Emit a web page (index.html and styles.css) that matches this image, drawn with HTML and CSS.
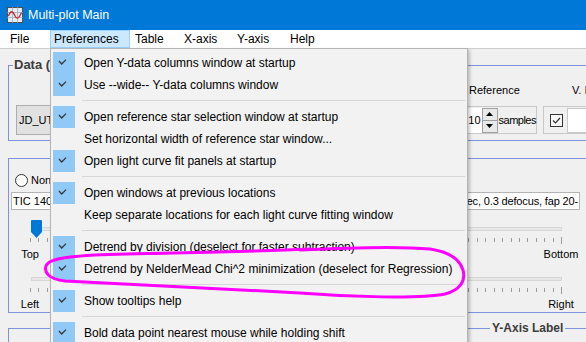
FILE: index.html
```html
<!DOCTYPE html>
<html>
<head>
<meta charset="utf-8">
<title>Multi-plot Main</title>
<link rel="stylesheet" href="styles.css">
</head>
<body>
<div class="window">
  <div class="titlebar">
    <svg class="app-icon" viewBox="0 0 16 16" width="16" height="16">
      <rect x="0.5" y="0.5" width="15" height="15" fill="#e4edf6" stroke="#505050"/>
      <path d="M0.5 5.5H15.5M0.5 10.5H15.5M5.5 0.5V15.5M10.5 0.5V15.5" stroke="#a9bccc" fill="none"/>
      <path d="M1.5 9 C3.5 3.5, 5.5 3.5, 7.5 8 S11.5 12.5, 14.5 5.5" stroke="#d42424" stroke-width="1.3" fill="none"/>
    </svg>
    <span class="title">Multi-plot Main</span>
  </div>

  <div class="menubar">
    <span class="mb-item mb-file">File</span>
    <span class="mb-item mb-active">Preferences</span>
    <span class="mb-item mb-table">Table</span>
    <span class="mb-item mb-axis">X-axis</span>
    <span class="mb-item mb-axis">Y-axis</span>
    <span class="mb-item">Help</span>
  </div>

  <div class="client">
    <fieldset class="group group-data">
      <legend class="legend-data">Data (JD)</legend>
      <div class="data-grid">
        <div class="btn">JD_UTC</div>
        <div class="ref-label">Reference</div>
        <div class="vl-label">V. I</div>
        <div class="spin-box">
          <div class="spin-field">10</div>
          <div class="spin-btns">
            <span class="spin-btn"><svg width="7" height="4" viewBox="0 0 7 4"><path d="M0 4 L3.5 0 L7 4Z" fill="#000"/></svg></span>
            <span class="spin-btn"><svg width="7" height="4" viewBox="0 0 7 4"><path d="M0 0 L3.5 4 L7 0Z" fill="#000"/></svg></span>
          </div>
          <span class="samples">samples</span>
        </div>
        <div class="chk-box">
          <span class="checkbox"><svg width="11" height="11" viewBox="0 0 11 11"><path d="M2 5.5 L4.5 8 L9 3" stroke="#333" stroke-width="1.2" fill="none"/></svg></span>
          <span class="chk-field"></span>
        </div>
      </div>
    </fieldset>

    <fieldset class="group group-plot">
      <div class="radio-row"><span class="radio"></span><span class="radio-label">None</span></div>
      <div class="text-field"><span>TIC 1402</span><span class="field-tail">sec, 0.3 defocus, fap 20-</span></div>
      <div class="slider slider-first">
        <div class="track-row">
          <div class="track"></div>
          <svg class="thumb" width="11" height="18" viewBox="0 0 11 18"><path d="M1 0 H10 Q11 0 11 1 V12 L5.5 18 L0 12 V1 Q0 0 1 0Z" fill="#0078d7"/></svg>
        </div>
        <div class="ticks"></div>
        <div class="slider-labels"><span>Top</span><span>Bottom</span></div>
      </div>
      <div class="slider">
        <div class="track-row">
          <div class="track"></div>
          <svg class="thumb thumb-mid" width="11" height="18" viewBox="0 0 11 18"><path d="M1 0 H10 Q11 0 11 1 V12 L5.5 18 L0 12 V1 Q0 0 1 0Z" fill="#0078d7"/></svg>
        </div>
        <div class="ticks"></div>
        <div class="slider-labels"><span>Left</span><span>Right</span></div>
      </div>
    </fieldset>

    <fieldset class="group group-label">
      <legend class="legend-y">Y-Axis Label</legend>
    </fieldset>
  </div>

  <div class="dropdown">
    <div class="item"><span class="check on"><svg viewBox="0 0 22 22" width="22" height="22"><path d="M6 9 L8.7 12 L13 7.6" stroke="#333" stroke-width="1.2" fill="none"/></svg></span><span class="label">Open Y-data columns window at startup</span></div>
    <div class="item"><span class="check on"><svg viewBox="0 0 22 22" width="22" height="22"><path d="M6 9 L8.7 12 L13 7.6" stroke="#333" stroke-width="1.2" fill="none"/></svg></span><span class="label">Use --wide-- Y-data columns window</span></div>
    <div class="sep"></div>
    <div class="item"><span class="check on"><svg viewBox="0 0 22 22" width="22" height="22"><path d="M6 9 L8.7 12 L13 7.6" stroke="#333" stroke-width="1.2" fill="none"/></svg></span><span class="label">Open reference star selection window at startup</span></div>
    <div class="item"><span class="check"></span><span class="label">Set horizontal width of reference star window...</span></div>
    <div class="item"><span class="check on"><svg viewBox="0 0 22 22" width="22" height="22"><path d="M6 9 L8.7 12 L13 7.6" stroke="#333" stroke-width="1.2" fill="none"/></svg></span><span class="label">Open light curve fit panels at startup</span></div>
    <div class="sep"></div>
    <div class="item"><span class="check on"><svg viewBox="0 0 22 22" width="22" height="22"><path d="M6 9 L8.7 12 L13 7.6" stroke="#333" stroke-width="1.2" fill="none"/></svg></span><span class="label">Open windows at previous locations</span></div>
    <div class="item"><span class="check"></span><span class="label">Keep separate locations for each light curve fitting window</span></div>
    <div class="sep"></div>
    <div class="item"><span class="check on"><svg viewBox="0 0 22 22" width="22" height="22"><path d="M6 9 L8.7 12 L13 7.6" stroke="#333" stroke-width="1.2" fill="none"/></svg></span><span class="label">Detrend by division (deselect for faster subtraction)</span></div>
    <div class="item"><span class="check on"><svg viewBox="0 0 22 22" width="22" height="22"><path d="M6 9 L8.7 12 L13 7.6" stroke="#333" stroke-width="1.2" fill="none"/></svg></span><span class="label">Detrend by NelderMead Chi^2 minimization (deselect for Regression)</span></div>
    <div class="sep"></div>
    <div class="item"><span class="check on"><svg viewBox="0 0 22 22" width="22" height="22"><path d="M6 9 L8.7 12 L13 7.6" stroke="#333" stroke-width="1.2" fill="none"/></svg></span><span class="label">Show tooltips help</span></div>
    <div class="sep"></div>
    <div class="item"><span class="check on"><svg viewBox="0 0 22 22" width="22" height="22"><path d="M6 9 L8.7 12 L13 7.6" stroke="#333" stroke-width="1.2" fill="none"/></svg></span><span class="label">Bold data point nearest mouse while holding shift</span></div>
  </div>

  <svg class="annotation" width="586" height="342" viewBox="0 0 586 342">
    <path d="M300 250 C340 248, 400 246, 430 249 C450 252, 460 260, 463 270 C466 281, 460 290, 445 294 C420 299, 350 297, 300 293 C230 289, 120 284, 65 281 C48 279, 44 272, 46 266 C48 260, 60 257, 95 255 C160 253, 240 252, 310 249" stroke="#ff00ff" stroke-width="3" fill="none" stroke-linecap="round"/>
  </svg>
</div>
</body>
</html>
```

FILE: styles.css
```css
* { box-sizing: border-box; }
html, body { margin: 0; padding: 0; }
body {
  width: 586px;
  height: 342px;
  overflow: hidden;
  background: #f0f0f0;
  font-family: "Liberation Sans", Arial, sans-serif;
  color: #000;
}
.window {
  position: relative;
  width: 586px;
  height: 342px;
  overflow: hidden;
  background: #f0f0f0;
}

/* title bar */
.titlebar {
  height: 30px;
  background: #0078d7;
  display: flex;
  align-items: center;
  padding-left: 7px;
  color: #fff;
  font-size: 12.5px;
}
.app-icon { flex: none; display: block; }
.title { margin-left: 5px; }

/* menu bar */
.menubar {
  height: 19px;
  background: #fff;
  border-bottom: 1px solid #cfcfcf;
  display: flex;
  padding-left: 10px;
  font-size: 12px;
  line-height: 18px;
}
.mb-item { flex: none; white-space: nowrap; }
.mb-file { width: 40px; }
.mb-active {
  width: 80px;
  padding-left: 3px;
  background: #cce8ff;
  border: 1px solid #99d1ff;
  line-height: 16px;
  margin-right: 5px;
}
.mb-table { width: 49px; }
.mb-axis { width: 53px; }

/* client area */
.client {
  padding: 8px 0 0 8px;
  width: 630px;
  font-size: 11px;
}
.group {
  margin: 0;
  padding: 0;
  min-width: 0;
  width: 610px;
  border: 1px solid #7d94dc;
}
.group legend {
  margin-left: 4px;
  padding: 0 1px;
  font-size: 12px;
  font-weight: bold;
  line-height: 16px;
  color: #3c3c3c;
  white-space: nowrap;
}
.group .legend-data { font-size: 13px; }
.group-data { padding: 10px 0 6px 0; }

.data-grid {
  display: grid;
  grid-template-columns: 431px 97px 80px;
  grid-template-rows: 14px 28px;
  row-gap: 9px;
  line-height: 14px;
}
.btn {
  grid-column: 1;
  grid-row: 2;
  margin: -1px 0 0 7px;
  width: 70px;
  height: 30px;
  background: #e1e1e1;
  border: 1px solid #adadad;
  padding-left: 2px;
  display: flex;
  align-items: center;
}
.ref-label { grid-column: 2; grid-row: 1; padding-left: 29px; white-space: nowrap; }
.vl-label { grid-column: 3; grid-row: 1; padding-left: 35px; white-space: nowrap; }
.spin-box {
  grid-column: 2;
  grid-row: 2;
  border: 1px solid #c9c9c9;
  display: flex;
  align-items: center;
  justify-content: flex-end;
}
.spin-field {
  width: 20px;
  height: 25px;
  background: #fff;
  text-align: right;
  line-height: 25px;
  padding-right: 1px;
}
.spin-btns {
  width: 16px;
  height: 25px;
  display: flex;
  flex-direction: column;
  border: 1px solid #a0a0a0;
  background: #e9e9e9;
}
.spin-btn {
  flex: 1;
  display: flex;
  align-items: center;
  justify-content: center;
}
.spin-btn + .spin-btn { border-top: 1px solid #a0a0a0; }
.spin-btn svg { display: block; }
.samples { margin-left: 1px; letter-spacing: -0.5px; white-space: nowrap; }
.chk-box {
  grid-column: 3;
  grid-row: 2;
  margin-left: 6px;
  border: 1px solid #c9c9c9;
  display: flex;
  align-items: center;
  padding-left: 6px;
}
.checkbox {
  width: 13px;
  height: 13px;
  border: 1px solid #333;
  background: #f7f7f7;
  display: block;
}
.checkbox svg { display: block; }
.chk-field {
  margin-left: 4px;
  height: 25px;
  flex: 1;
  background: #fff;
  border: 1px solid #c9c9c9;
}

/* plot group */
.group-plot { margin-top: 17px; padding: 13px 0 0 0; }
.radio-row {
  height: 16px;
  display: flex;
  align-items: center;
  padding-left: 6px;
}
.radio {
  width: 13px;
  height: 13px;
  border-radius: 50%;
  border: 1px solid #333;
  background: #fff;
}
.radio-label { margin-left: 3px; }
.text-field {
  margin: 4px 0 0 2px;
  width: 569px;
  height: 18px;
  border: 1px solid #b4b4b4;
  background: #fff;
  display: flex;
  justify-content: space-between;
  overflow: hidden;
  line-height: 16px;
  padding: 0 1px;
  white-space: nowrap;
}
.field-tail { letter-spacing: -0.15px; }
.slider { height: 50px; }
.slider-first { margin-top: 2px; }
.track-row {
  position: relative;
  height: 24px;
  padding-top: 15px;
}
.track {
  margin-left: 22px;
  width: 531px;
  height: 4px;
  background: #e7e7e7;
  border: 1px solid #d6d6d6;
}
.thumb {
  position: absolute;
  left: 22px;
  top: 8px;
  display: block;
}
.thumb-mid { left: 250px; }
.ticks {
  position: relative;
  margin: 2px 0 0 21px;
  width: 532px;
  height: 4px;
  background: repeating-linear-gradient(90deg, #9a9a9a 0 1px, transparent 1px 8.43px);
}
.ticks::after {
  content: "";
  position: absolute;
  right: 0;
  top: -1px;
  width: 1px;
  height: 7px;
  background: #9a9a9a;
}
.slider-labels {
  margin: 5px 0 0 1px;
  width: 571px;
  height: 14px;
  line-height: 14px;
  display: flex;
  justify-content: space-between;
}
.slider-labels span { width: 40px; text-align: center; }

/* Y label group */
.group-label { margin-top: 7px; height: 60px; }
.group-label .legend-y { margin-left: 481px; padding: 0 2px; }

/* dropdown menu */
.dropdown {
  position: absolute;
  left: 50px;
  top: 48px;
  width: 418px;
  height: 310px;
  background: #f2f2f2;
  border: 1px solid #b4b4b4;
  box-shadow: 2px 2px 3px rgba(0, 0, 0, 0.22);
  padding: 3px 2px 0 2px;
  font-size: 12px;
}
.item {
  height: 22px;
  display: flex;
  align-items: center;
  white-space: nowrap;
}
.check {
  width: 22px;
  height: 22px;
  flex: none;
}
.check.on { background: #90c8f6; }
.check svg { display: block; }
.label { margin-left: 9px; }
.sep {
  height: 10px;
  padding-top: 4px;
}
.sep::before {
  content: "";
  display: block;
  margin: 0 0 0 29px;
  height: 1px;
  background: #d7d7d7;
}

/* annotation overlay */
.annotation {
  position: absolute;
  left: 0;
  top: 0;
  pointer-events: none;
}
```
